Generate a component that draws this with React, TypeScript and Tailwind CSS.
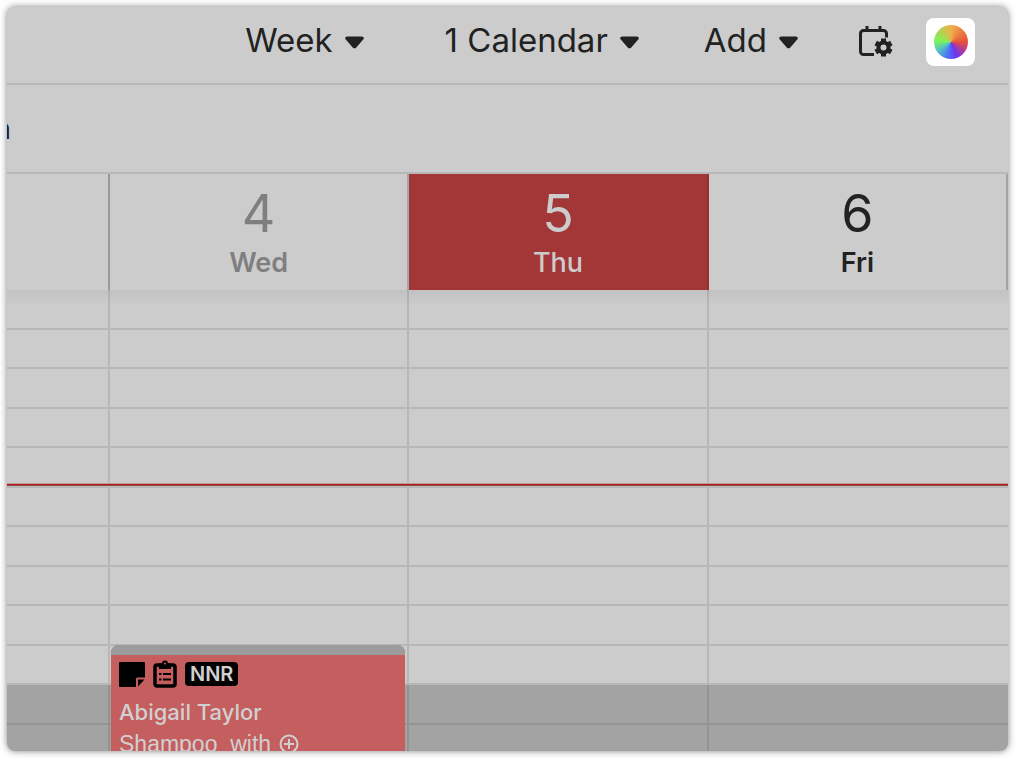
import type { ReactNode } from 'react';
import clsx from 'clsx';

interface Day {
  date: number;
  name: string;
  state: 'past' | 'today' | 'future';
}

const days: Day[] = [
  { date: 4, name: 'Wed', state: 'past' },
  { date: 5, name: 'Thu', state: 'today' },
  { date: 6, name: 'Fri', state: 'future' },
];

const OPEN_SLOTS = 10;
const slots = Array.from({ length: 12 }, (_, i) => i);

function MenuButton({ children }: { children: ReactNode }) {
  return (
    <button className="flex items-center gap-3 text-[33px] leading-10 text-[#222] cursor-pointer whitespace-nowrap">
      {children}
      <svg viewBox="0 0 19 13" className="w-[19px] h-[13px] mt-1" fill="#222">
        <path d="M2.200.5h14.600c1.900 0 2.600 1.700 1.400 3l-6.900 7.900c-1 1.200-2.600 1.200-3.600 0L.8 3.500C-.4 2.200.3.5 2.200.5z" />
      </svg>
    </button>
  );
}

function CalendarSettingsIcon() {
  return (
    <svg viewBox="0 0 36 34" className="w-9 h-[34px]" fill="none" stroke="#222">
      <path d="M16 29.500H5.500a3 3 0 0 1-3-3V8.500a3 3 0 0 1 3-3h20a3 3 0 0 1 3 3v4" strokeWidth="3" />
      <path d="M9 1v5M22 1v5" strokeWidth="3" />
      <circle cx="25.500" cy="22.500" r="5" strokeWidth="4" />
      <path
        d="M25.500 13.500v4M25.500 27.500v4M17.700 18l3.500 2M29.800 25l3.500 2M17.700 27l3.500-2M29.800 20l3.500-2"
        strokeWidth="5"
      />
    </svg>
  );
}

function NoteIcon() {
  return (
    <svg viewBox="0 0 26 25" className="w-[26px] h-[25px]">
      <path d="M1 0h24a1 1 0 0 1 1 1v14.500h-7.500a1.500 1.500 0 0 0-1.500 1.500v8H1a1 1 0 0 1-1-1V1a1 1 0 0 1 1-1z" />
      <path d="M19 17.500h6.500L19 24.500z" />
    </svg>
  );
}

function ClipboardIcon() {
  return (
    <svg viewBox="0 0 24 28" className="w-6 h-7" fill="none" stroke="#000">
      <rect x="2" y="5" width="20" height="21" rx="2" strokeWidth="3.500" />
      <path d="M6 3.500h3a3 3 0 0 1 6 0h3V9H6z" fill="#000" stroke="none" />
      <circle cx="12" cy="3.500" r="1" fill="#c55e5e" stroke="none" />
      <path d="M6 14h2.500M10 14h8M6 19.500h2.500M10 19.500h8" strokeWidth="2.200" />
    </svg>
  );
}

function DayHeader({ day }: { day: Day }) {
  return (
    <div
      className={clsx(
        'flex-1 flex flex-col items-center pt-3 border-r-2',
        day.state === 'past' && 'text-[#7f7f7f] border-[#a2a6a6] font-semibold',
        day.state === 'today' && 'bg-[#a33636] text-[#cccccc] border-[#982f2f] font-medium',
        day.state === 'future' && 'text-[#222] border-[#a4a4a4] font-semibold',
      )}
    >
      <span className="text-[52px] leading-[56px] font-normal">{day.date}</span>
      <span className="text-[27px] leading-[42px]">{day.name}</span>
    </div>
  );
}

function Slots({ divider }: { divider: boolean }) {
  return (
    <>
      {slots.map(i => (
        <div
          key={i}
          className={clsx(
            'border-b-2',
            divider && 'border-r-2',
            i % 2 === 0 ? 'h-10' : 'h-[39px]',
            i < OPEN_SLOTS ? 'border-[#b7b7b7]' : 'bg-[#a3a3a3] border-[#939393]',
          )}
        />
      ))}
    </>
  );
}

function Appointment() {
  return (
    <article className="absolute top-[355px] left-px right-1 h-40 rounded-t-lg overflow-hidden bg-[#c55e5e] text-[#d0d0d0]">
      <div className="h-[10px] bg-[#9c9c9c]" />
      <div className="px-2 pt-[5px]">
        <div className="flex items-center gap-2 h-7">
          <NoteIcon />
          <ClipboardIcon />
          <span className="px-[5px] rounded bg-black text-[20px] leading-6 font-semibold">NNR</span>
        </div>
        <h3 className="mt-2 text-[22px] leading-8 font-medium">Abigail Taylor</h3>
        <p className="flex items-center text-[23px] leading-8 font-['Liberation_Sans',sans-serif]">
          <span className="whitespace-pre">Shampoo  with</span>
          <svg viewBox="0 0 20 20" className="w-5 h-5 ml-2" fill="none" stroke="#d0d0d0" strokeWidth="2">
            <circle cx="10" cy="10" r="8.500" />
            <path d="M10 5v10M5 10h10" />
          </svg>
        </p>
      </div>
    </article>
  );
}

export default function App() {
  return (
    <div className="h-screen bg-white pl-[7px] pt-[7px] pr-2 pb-2 font-['Inter',sans-serif]">
      <main className="h-full flex flex-col rounded-lg overflow-hidden bg-[#cccccc] shadow-[0_0_7px_rgba(0,0,0,0.5)]">
        <header className="shrink-0 h-[78px] flex items-start justify-end pr-[33px] pt-[11px] border-b-2 border-[#b8b8b8]">
          <nav className="flex items-center h-12">
            <div className="flex mr-[60px] gap-x-[65px] -mt-1">
              <div className="mr-4">
                <MenuButton>Week</MenuButton>
              </div>
              <MenuButton>1 Calendar</MenuButton>
              <MenuButton>Add</MenuButton>
            </div>
            <button aria-label="Calendar settings" className="mr-8 cursor-pointer">
              <CalendarSettingsIcon />
            </button>
            <button aria-label="Colors" className="w-[49px] h-12 rounded-lg bg-white flex items-center justify-center cursor-pointer">
              <span className="w-[34px] h-[34px] rounded-full bg-[conic-gradient(#f0b04a,#e8503a_25%,#b03a9a_35%,#6a35f0_44%,#4a7af5_55%,#55c5c0_66%,#7bf55a_76%,#b5d050_88%,#f0b04a)]" />
            </button>
          </nav>
        </header>

        <div className="shrink-0 h-[89px] flex items-center border-b-2 border-[#b8b8b8]">
          <span className="w-1 flex justify-end overflow-hidden text-[28px] leading-9 text-[#222]">n</span>
        </div>

        <div className="shrink-0 h-[116px] flex">
          <div className="w-[103px] border-r-2 border-[#969a9a]" />
          {days.map(day => (
            <DayHeader key={day.date} day={day} />
          ))}
        </div>

        <div className="relative flex-1 min-h-0 flex overflow-hidden">
          <div className="w-[103px]">
            <Slots divider />
          </div>
          {days.map(day => (
            <div key={day.date} className="relative flex-1">
              <Slots divider={day.state !== 'future'} />
              {day.state === 'past' && <Appointment />}
            </div>
          ))}
          <div className="absolute inset-x-0 top-0 h-4 bg-linear-to-b from-black/5 to-transparent" />
          {/* current time */}
          <div className="absolute inset-x-0 top-[193px] h-[3px] border-t border-b border-t-[#bf9c9c] border-b-[#8c5050] bg-[#b51515]" />
        </div>
      </main>
    </div>
  );
}
